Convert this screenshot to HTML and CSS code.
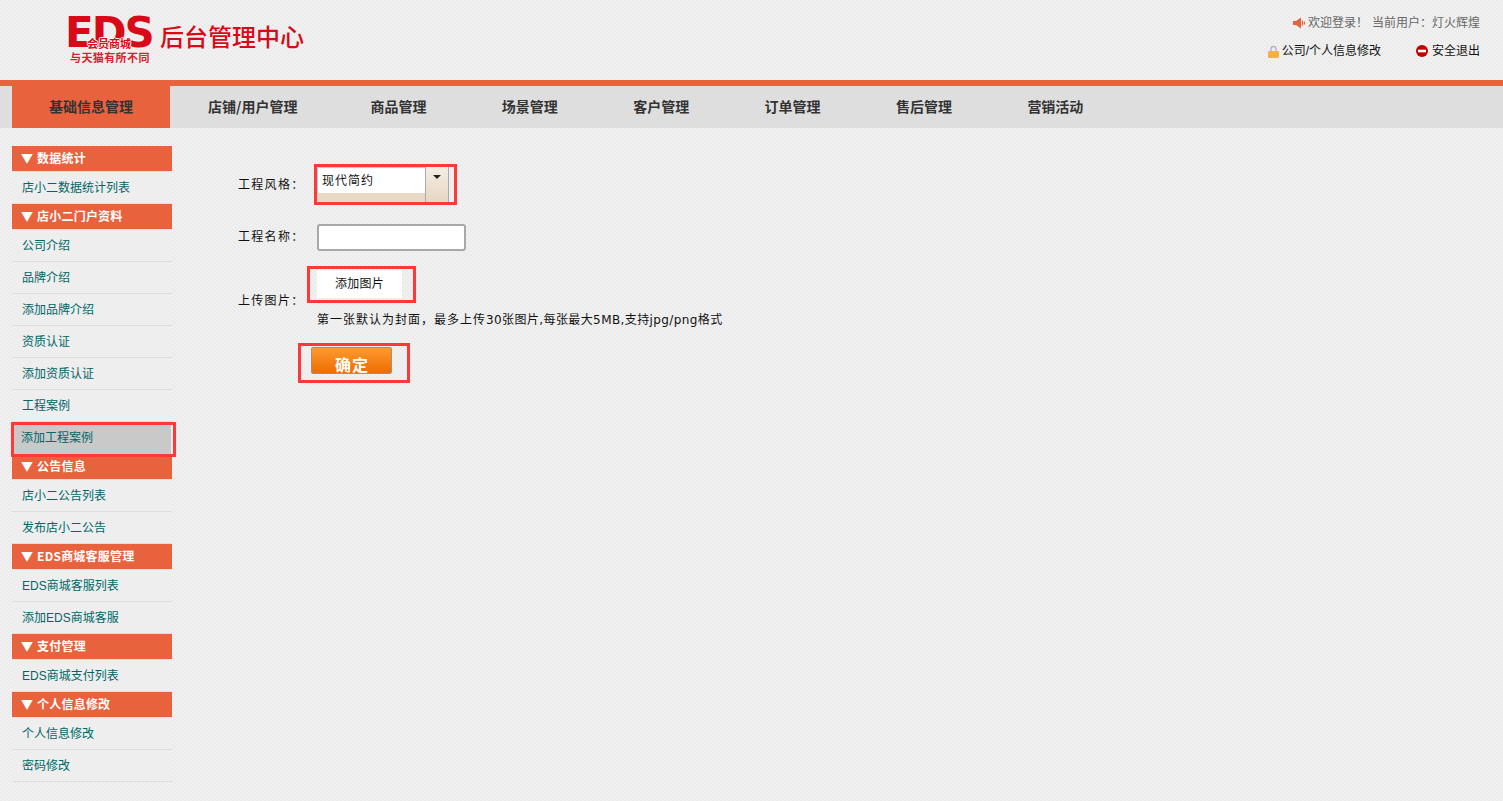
FILE: index.html
```html
<!DOCTYPE html>
<html lang="zh-CN">
<head>
<meta charset="utf-8">
<title>后台管理中心</title>
<link rel="stylesheet" href="styles.css">
</head>
<body>
<header class="top">
  <div class="logo">
    <div class="logo-mark">
      <div class="eds">EDS<span class="eds-sub">会员商城</span></div>
      <div class="slogan">与天猫有所不同</div>
    </div>
    <div class="logo-title">后台管理中心</div>
  </div>
  <div class="user">
    <div class="user-row muted">
      <svg class="ico" viewBox="0 0 12 12"><path d="M0 4h3l5-3.500v11L3 8H0z" fill="#e8623d"/><path d="M9.500 3.500v5M11.500 4.500v3" stroke="#e8623d" stroke-width="1.200"/></svg>
      <span>欢迎登录！</span><span class="current">当前用户：灯火辉煌</span>
    </div>
    <div class="user-row">
      <svg class="ico lock" viewBox="0 0 13 13"><path d="M4 7V4a2.500 2.500 0 0 1 5 0v3" fill="none" stroke="#b5b5b5" stroke-width="1.400"/><rect x="1" y="6" width="11" height="7" rx="1" fill="#f2b23e"/></svg>
      <span>公司/个人信息修改</span>
      <svg class="ico exit" viewBox="0 0 12 12"><circle cx="6" cy="6" r="6" fill="#c00000"/><rect x="2" y="4.700" width="8" height="2.600" fill="#fff"/></svg>
      <span>安全退出</span>
    </div>
  </div>
</header>
<nav class="nav">
  <a class="nav-item active">基础信息管理</a>
  <a class="nav-item w1">店铺/用户管理</a>
  <a class="nav-item w2">商品管理</a>
  <a class="nav-item w3">场景管理</a>
  <a class="nav-item w3">客户管理</a>
  <a class="nav-item w3">订单管理</a>
  <a class="nav-item w3">售后管理</a>
  <a class="nav-item w3">营销活动</a>
</nav>
<div class="main">
  <aside class="side">
    <h3 class="side-head">▼ 数据统计</h3>
    <a class="side-item">店小二数据统计列表</a>
    <h3 class="side-head">▼ 店小二门户资料</h3>
    <a class="side-item">公司介绍</a>
    <a class="side-item">品牌介绍</a>
    <a class="side-item">添加品牌介绍</a>
    <a class="side-item">资质认证</a>
    <a class="side-item">添加资质认证</a>
    <a class="side-item">工程案例</a>
    <a class="side-item current-item">添加工程案例</a>
    <h3 class="side-head">▼ 公告信息</h3>
    <a class="side-item">店小二公告列表</a>
    <a class="side-item">发布店小二公告</a>
    <h3 class="side-head">▼ EDS商城客服管理</h3>
    <a class="side-item">EDS商城客服列表</a>
    <a class="side-item">添加EDS商城客服</a>
    <h3 class="side-head">▼ 支付管理</h3>
    <a class="side-item">EDS商城支付列表</a>
    <h3 class="side-head">▼ 个人信息修改</h3>
    <a class="side-item">个人信息修改</a>
    <a class="side-item">密码修改</a>
  </aside>
  <form class="form">
    <div class="row row-style">
      <label class="label style-label">工程风格：</label>
      <div class="mark mark-select">
        <div class="select">
          <div class="select-text">现代简约</div>
          <div class="select-btn"><i class="caret"></i></div>
        </div>
      </div>
    </div>
    <div class="row row-name">
      <label class="label name-label">工程名称：</label>
      <input class="text-input" type="text">
    </div>
    <div class="row row-upload">
      <label class="label upload-label">上传图片：</label>
      <div class="mark mark-add"><div class="add-btn">添加图片</div></div>
    </div>
    <p class="hint"><span class="hint-wide">第一张默认为封面，最多上传</span><span class="hint-rest">30张图片,每张最大5MB,支持jpg/png格式</span></p>
    <div class="mark mark-submit"><div class="submit">确定</div></div>
  </form>
</div>
</body>
</html>
```
FILE: styles.css
```css
* { box-sizing: border-box; }
html, body { margin: 0; height: 100%; }
body {
  overflow: hidden;
  font: 12px/1.2 "Liberation Sans", "Noto Sans CJK SC", sans-serif;
  color: #111;
  background: repeating-conic-gradient(#f1f1f1 0 25%, #ebebeb 0 50%) 0 0 / 4px 4px;
}
.top {
  height: 86px;
  border-bottom: 6px solid #e8623d;
  display: flex;
  justify-content: space-between;
}
.logo { display: flex; padding: 17px 0 0 68px; }
.logo-mark { width: 84px; }
.eds {
  position: relative;
  height: 31px;
  margin-left: -3px;
  font: 700 42px/31px "DejaVu Sans", sans-serif;
  letter-spacing: -2px;
  color: #d80a18;
  white-space: nowrap;
}
.eds-sub {
  position: absolute;
  left: 22px;
  top: 20px;
  font: 700 11px/13px "Noto Sans CJK SC", sans-serif;
  letter-spacing: 0;
  color: #d80a18;
  text-shadow: 1px 0 #fff, -1px 0 #fff, 0 1px #fff, 0 -1px #fff;
  white-space: nowrap;
}
.slogan {
  margin: 2px 0 0 2px;
  font: 700 11px/14px "Noto Sans CJK SC", sans-serif;
  letter-spacing: .4px;
  white-space: nowrap;
  color: #d8202c;
}
.logo-title {
  margin: 5px 0 0 8px;
  font: 500 24px/28px "Noto Sans CJK SC", sans-serif;
  color: #d80a18;
  white-space: nowrap;
}
.user { padding: 15px 23px 0 0; color: #111; }
.user-row { display: flex; justify-content: flex-end; align-items: center; height: 16px; margin-bottom: 12px; }
.muted { color: #666; }
.current { margin-left: 4px; }
.ico { width: 12px; height: 12px; margin-right: 3px; flex: none; }
.lock { width: 13px; height: 13px; margin-right: 2px; }
.exit { margin: 0 4px 0 35px; }
.nav {
  height: 42px;
  background: #dedede;
  padding-left: 12px;
  display: flex;
}
.nav-item {
  font: 700 14px/40px "Noto Sans CJK SC", sans-serif;
  color: #333;
  white-space: nowrap;
}
.active { width: 158px; background: #e8623d; text-align: center; }
.w1 { margin-left: 38px; }
.w2 { margin-left: 73px; }
.w3 { margin-left: 75.400px; }
.main { display: flex; padding: 18px 0 0 12px; }
.side { width: 160px; flex: none; }
.side-head {
  margin: 0;
  height: 26px;
  padding-left: 9px;
  background: #e8623d;
  border-bottom: 1px solid #e0e0e0;
  color: #fff;
  font: 700 12px/24px "Noto Sans CJK SC", sans-serif;
  letter-spacing: .2px;
  word-spacing: 1px;
}
.side-item {
  display: block;
  height: 32px;
  padding-left: 10px;
  background: #eeeeee;
  border-bottom: 1px solid #dedede;
  color: #006666;
  font: 12px/33px "Liberation Sans", "Noto Sans CJK SC", sans-serif;
}
.current-item {
  position: relative;
  z-index: 1;
  left: -1px;
  width: 165px;
  height: 35px;
  margin-bottom: -3px;
  padding: 0 0 0 7px;
  background: #c9c9c9;
  border: 3px solid #ff3838;
  line-height: 27px;
  box-shadow: inset -2px 0 0 #eee;
}
.form { padding: 18px 0 0 65px; flex: 1; }
.row { display: flex; }
.label { width: 63px; padding-left: 1px; flex: none; color: #111; letter-spacing: 1.300px; white-space: nowrap; }
.mark { border: 3px solid #ff3838; }
.row-style { align-items: center; height: 41px; }
.style-label { margin-top: 2px; }
.mark-select { width: 143px; height: 41px; margin-left: 14px; padding: 0 5px 0 0; }
.select {
  height: 35px;
  display: flex;
  background: #e8d8c4;
  border-right: 1px solid #aaa;
}
.select-text {
  width: 108px;
  height: 26px;
  background: #fff;
  border: 1px solid #ccc;
  border-width: 1px 0 0 1px;
  padding-left: 4px;
  font-size: 12px;
  line-height: 27px;
  letter-spacing: 1px;
}
.select-btn {
  flex: 1;
  border-left: 1px solid #aaa;
  position: relative;
  background: linear-gradient(#f4eee4, #e6d6c2);
}
.caret {
  position: absolute;
  left: 7px;
  top: 8px;
  border: 4px solid transparent;
  border-top: 4px solid #222;
  border-bottom: 0;
}
.row-name { align-items: center; margin-top: 19px; height: 27px; }
.name-label { margin-top: -1px; }
.text-input {
  width: 149px;
  height: 27px;
  margin-left: 17px;
  padding: 0 4px;
  background: #fff;
  border: 2px solid #a8a8a8;
  border-radius: 3px;
  outline: 0;
}
.row-upload { margin-top: 15px; height: 37px; }
.upload-label { align-self: flex-end; line-height: 16px; margin-bottom: -6px; }
.mark-add {
  width: 109px;
  height: 37px;
  margin-left: 7px;
  padding: 1px 11px 2px 7px;
}
.add-btn { height: 28px; background: #fff; text-align: center; line-height: 28px; letter-spacing: .3px; }
.hint {
  margin: 10px 0 0 80px;
  height: 14px;
  font-family: "DejaVu Sans", "Noto Sans CJK SC", sans-serif;
  line-height: 14px;
  white-space: nowrap;
}
.hint-wide { letter-spacing: 1px; }
.hint-rest { letter-spacing: .4px; }
.mark-submit {
  width: 112px;
  height: 40px;
  margin: 16px 0 0 61px;
  padding: 1px 0 0 10px;
}
.submit {
  width: 81px;
  height: 27px;
  border: 1px solid #a89078;
  border-radius: 2px;
  background: linear-gradient(#ff9a30, #ee6d00);
  color: #fff;
  text-align: center;
  font: 700 16px/32px "Noto Sans CJK SC", sans-serif;
  letter-spacing: 1px;
  text-indent: 1px;
}
```
